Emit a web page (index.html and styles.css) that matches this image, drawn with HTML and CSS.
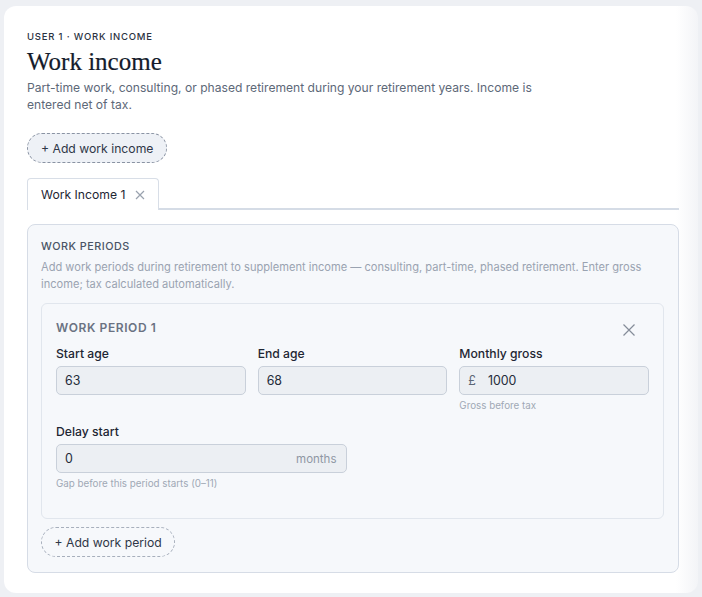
FILE: index.html
```html
<!DOCTYPE html>
<html>
<head>
<meta charset="utf-8">
<link rel="stylesheet" href="styles.css">
</head>
<body>
<div class="card">
  <div class="eyebrow">USER 1 · WORK INCOME</div>
  <h1 class="title">Work income</h1>
  <p class="desc">Part-time work, consulting, or phased retirement during your retirement years. Income is entered net of tax.</p>
  <button class="add-btn">+ Add work income</button>
  <div class="tabs">
    <div class="tab">Work Income 1 <span class="tab-x">
      <svg width="10" height="10" viewBox="0 0 10 10"><path d="M1 1L9 9M9 1L1 9" stroke="#9aa2ae" stroke-width="1.2" fill="none"/></svg>
    </span></div>
    <div class="tab-rest"></div>
  </div>
  <div class="panel">
    <div class="panel-title">WORK PERIODS</div>
    <p class="panel-desc">Add work periods during retirement to supplement income — consulting, part-time, phased retirement. Enter gross income; tax calculated automatically.</p>
    <div class="period">
      <div class="period-head">
        <span class="period-title">WORK PERIOD 1</span>
        <svg class="close" width="14" height="14" viewBox="0 0 14 14"><path d="M1.5 1.5L12.5 12.5M12.5 1.5L1.5 12.5" stroke="#858c99" stroke-width="1.2" fill="none"/></svg>
      </div>
      <div class="grid3">
        <div class="field">
          <label class="label">Start age</label>
          <div class="input"><span class="val">63</span></div>
        </div>
        <div class="field">
          <label class="label">End age</label>
          <div class="input"><span class="val">68</span></div>
        </div>
        <div class="field">
          <label class="label">Monthly gross</label>
          <div class="input"><span class="prefix">£</span><span class="val">1000</span></div>
          <div class="help">Gross before tax</div>
        </div>
      </div>
      <div class="grid2">
        <div class="field">
          <label class="label">Delay start</label>
          <div class="input"><span class="val grow">0</span><span class="suffix">months</span></div>
          <div class="help">Gap before this period starts (0–11)</div>
        </div>
      </div>
    </div>
    <button class="add-btn small">+ Add work period</button>
  </div>
</div>
</body>
</html>
```
FILE: styles.css
```css
* { box-sizing: border-box; }
html, body { margin: 0; }
body {
  background: #eef0f4;
  padding: 6px 4px 4px 4px;
  font-family: "Inter", "Noto Sans", sans-serif;
  color: #1e2633;
}
.card {
  background: linear-gradient(to right, #ffffff 0, #ffffff calc(100% - 22px), #f3f4f7 100%);
  border-radius: 12px;
  padding: 25px 19px 21px 23px;
  height: 587px;
}
.eyebrow {
  font-size: 9.5px;
  letter-spacing: 0.8px;
  color: #2b3242;
  font-weight: 500;
  line-height: 12px;
}
.title {
  font-family: "Liberation Serif", "DejaVu Serif", serif;
  font-weight: 400;
  font-size: 25px;
  line-height: 30px;
  margin: 4px 0 2px 0;
  color: #141b2b;
  -webkit-text-stroke: 0.2px #141b2b;
}
.desc {
  margin: 0;
  font-size: 12.1px;
  line-height: 17px;
  color: #5d6878;
  max-width: 520px;
}
.add-btn {
  display: inline-block;
  font-family: inherit;
  font-size: 12.2px;
  color: #2f3747;
  background: #eef1f6;
  border: 1px dashed #8a93a3;
  border-radius: 15px;
  height: 30px;
  padding: 0 13px;
  margin-top: 20px;
  cursor: pointer;
}
.tabs {
  display: flex;
  margin-top: 15px;
  align-items: flex-end;
}
.tab {
  display: flex;
  align-items: center;
  gap: 9px;
  font-size: 12.2px;
  white-space: nowrap;
  color: #1e2633;
  height: 32px;
  padding: 0 13px;
  border: 1px solid #d8dee7;
  border-bottom: none;
  border-radius: 4px 4px 0 0;
}
.tab-x { display: flex; }
.tab-rest {
  flex: 1;
  border-bottom: 2px solid #d5dce6;
  height: 2px;
}
.panel {
  margin-top: 14px;
  background: #f6f8fb;
  border: 1px solid #d6dce6;
  border-radius: 8px;
  padding: 15px 14px 15px 13px;
}
.panel-title {
  font-size: 10.8px;
  letter-spacing: 0.5px;
  color: #4a5465;
  font-weight: 500;
  line-height: 14px;
}
.panel-desc {
  margin: 5px 0 0 0;
  font-size: 11.1px;
  line-height: 17px;
  color: #9aa3b1;
}
.period {
  margin-top: 10px;
  border: 1px solid #e1e6ed;
  border-radius: 6px;
  padding: 15px 14px 28px 14px;
}
.period-head {
  display: flex;
  justify-content: space-between;
  align-items: center;
  height: 16px;
  margin-bottom: 11px;
}
.period-title {
  font-size: 12px;
  font-weight: 600;
  letter-spacing: 0.6px;
  color: #6a7282;
}
.close { margin-right: 13px; margin-top: 6px; }
.grid3 {
  display: grid;
  grid-template-columns: 1fr 1fr 1fr;
  gap: 12px;
}
.grid2 {
  display: grid;
  grid-template-columns: 1fr 1fr;
  gap: 12px;
  margin-top: 12px;
}
.field { display: flex; flex-direction: column; }
.label {
  font-size: 12.2px;
  font-weight: 500;
  color: #1e2633;
  line-height: 15px;
  margin-bottom: 5px;
}
.input {
  display: flex;
  align-items: center;
  height: 29px;
  background: #eceff3;
  border: 1px solid #c9d0da;
  border-radius: 5px;
  padding: 0 9px 0 8px;
  font-size: 12.4px;
  color: #242c3a;
}
.prefix { color: #5d6675; margin-right: 12px; }
.grow { flex: 1; }
.suffix { color: #8f97a4; font-size: 11.5px; }
.help {
  font-size: 9.8px;
  color: #a0a8b5;
  margin-top: 5px;
  line-height: 12px;
}
.add-btn.small {
  background: transparent;
  border-color: #a7afbc;
  height: 30px;
  margin-top: 8px;
  color: #2f3747;
  padding: 0 12.5px;
}
```
